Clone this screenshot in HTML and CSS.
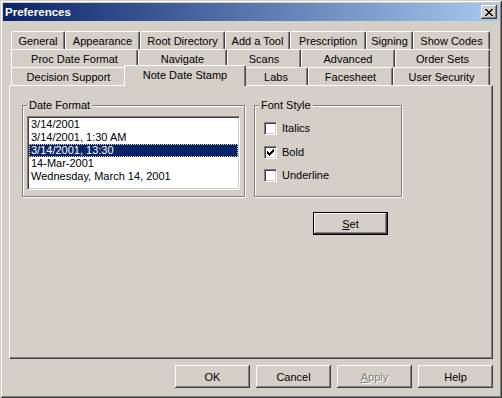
FILE: index.html
```html
<!DOCTYPE html>
<html>
<head>
<meta charset="utf-8">
<title>Preferences</title>
<link rel="stylesheet" href="styles.css">
</head>
<body>
<div class="window">
  <div class="titlebar">
    <span class="title">Preferences</span>
    <button class="close-btn" aria-label="Close">
      <svg width="8" height="7" viewBox="0 0 8 7" shape-rendering="crispEdges">
        <rect x="0" y="0" width="2" height="1"/><rect x="6" y="0" width="2" height="1"/>
        <rect x="1" y="1" width="2" height="1"/><rect x="5" y="1" width="2" height="1"/>
        <rect x="2" y="2" width="4" height="1"/>
        <rect x="3" y="3" width="2" height="1"/>
        <rect x="2" y="4" width="4" height="1"/>
        <rect x="1" y="5" width="2" height="1"/><rect x="5" y="5" width="2" height="1"/>
        <rect x="0" y="6" width="2" height="1"/><rect x="6" y="6" width="2" height="1"/>
      </svg>
    </button>
  </div>

  <div class="tabctrl">
    <div class="tabrows">
      <div class="tabrow">
        <div class="tab tab-general">General</div>
        <div class="tab tab-appearance">Appearance</div>
        <div class="tab tab-root">Root Directory</div>
        <div class="tab tab-addtool">Add a Tool</div>
        <div class="tab tab-prescription">Prescription</div>
        <div class="tab tab-signing">Signing</div>
        <div class="tab tab-showcodes">Show Codes</div>
      </div>
      <div class="tabrow">
        <div class="tab tab-procdate">Proc Date Format</div>
        <div class="tab tab-navigate">Navigate</div>
        <div class="tab tab-scans">Scans</div>
        <div class="tab tab-advanced">Advanced</div>
        <div class="tab tab-ordersets">Order Sets</div>
      </div>
      <div class="tabrow">
        <div class="tab tab-decision">Decision Support</div>
        <div class="tab tab-notedate active">Note Date Stamp</div>
        <div class="tab tab-labs">Labs</div>
        <div class="tab tab-facesheet">Facesheet</div>
        <div class="tab tab-usersec">User Security</div>
      </div>
    </div>

    <div class="panel">
      <fieldset class="group group-date">
        <legend>Date Format</legend>
        <div class="listbox">
          <div class="item">3/14/2001</div>
          <div class="item">3/14/2001, 1:30 AM</div>
          <div class="item selected">3/14/2001, 13:30</div>
          <div class="item">14-Mar-2001</div>
          <div class="item">Wednesday, March 14, 2001</div>
        </div>
      </fieldset>

      <div class="rightcol">
        <fieldset class="group group-font">
          <legend>Font Style</legend>
          <div class="checks">
            <div class="check-row">
              <span class="checkbox"></span><span class="check-label">Italics</span>
            </div>
            <div class="check-row">
              <span class="checkbox">
                <svg width="7" height="7" viewBox="0 0 7 7" shape-rendering="crispEdges">
                  <rect x="6" y="0" width="1" height="1"/>
                  <rect x="5" y="1" width="2" height="1"/>
                  <rect x="0" y="2" width="1" height="1"/><rect x="4" y="2" width="3" height="1"/>
                  <rect x="0" y="3" width="2" height="1"/><rect x="3" y="3" width="3" height="1"/>
                  <rect x="0" y="4" width="5" height="1"/>
                  <rect x="1" y="5" width="3" height="1"/>
                  <rect x="2" y="6" width="1" height="1"/>
                </svg>
              </span><span class="check-label">Bold</span>
            </div>
            <div class="check-row">
              <span class="checkbox"></span><span class="check-label">Underline</span>
            </div>
          </div>
        </fieldset>
        <button class="btn btn-default btn-set"><u>S</u>et</button>
      </div>
    </div>
  </div>

  <div class="footer">
    <button class="btn">OK</button>
    <button class="btn">Cancel</button>
    <button class="btn btn-disabled"><u>A</u>pply</button>
    <button class="btn">Help</button>
  </div>
</div>
</body>
</html>
```

FILE: styles.css
```css
html, body {
  margin: 0;
  padding: 0;
  background: #d4d0c8;
  overflow: hidden;
}

body {
  font-family: "Liberation Sans", Arial, sans-serif;
  font-size: 11px;
  color: #000;
}

.window {
  width: 502px;
  height: 398px;
  box-sizing: border-box;
  padding: 3px;
  background: #d4d0c8;
  box-shadow:
    inset 1px 1px 0 #d4d0c8,
    inset -1px -1px 0 #404040,
    inset 2px 2px 0 #ffffff,
    inset -2px -2px 0 #808080;
}

/* ---------- title bar ---------- */
.titlebar {
  height: 18px;
  display: flex;
  align-items: center;
  justify-content: space-between;
  padding: 0 2px 0 2px;
  background: linear-gradient(to right, #0a246a 0%, #a6caf0 100%);
}

.title {
  color: #fff;
  font-weight: bold;
  font-size: 11.5px;
  line-height: 18px;
}

.close-btn {
  width: 16px;
  height: 14px;
  padding: 0;
  border: none;
  background: #d4d0c8;
  display: flex;
  align-items: center;
  justify-content: center;
  box-shadow:
    inset -1px -1px 0 #404040,
    inset 1px 1px 0 #ffffff,
    inset -2px -2px 0 #808080;
}

.close-btn svg {
  fill: #000;
  margin-left: -1px;
}

/* ---------- tabs ---------- */
.tabctrl {
  margin: 10px 0 0 6px;
  width: 484px;
}

.tabrows {
  padding-left: 2px;
}

.tabrow {
  display: flex;
  height: 18px;
}

.tab {
  box-sizing: border-box;
  flex: none;
  height: 18px;
  background: #d4d0c8;
  border-top: 1px solid #fff;
  border-left: 1px solid #fff;
  border-right: 1px solid #404040;
  border-radius: 2px 2px 0 0;
  box-shadow: inset -1px 0 0 #808080;
  text-align: center;
  line-height: 16px;
  padding-top: 1px;
  white-space: nowrap;
}

.tab.active {
  position: relative;
  z-index: 1;
  height: 21px;
  margin: -2px -2px -1px -2px;
}

.tab-general { width: 54px; }
.tab-appearance { width: 75px; }
.tab-root { width: 85px; }
.tab-addtool { width: 65px; }
.tab-prescription { width: 76px; }
.tab-signing { width: 47px; }
.tab-showcodes { width: 77px; }

.tab-procdate { width: 127px; }
.tab-navigate { width: 89px; }
.tab-scans { width: 74px; }
.tab-advanced { width: 94px; }
.tab-ordersets { width: 95px; }

.tab-decision { width: 115px; }
.tab-notedate { width: 118px; }
.tab-notedate.active { width: 122px; }
.tab-labs { width: 64px; }
.tab-facesheet { width: 85px; }
.tab-usersec { width: 97px; }

/* ---------- panel ---------- */
.panel {
  box-sizing: border-box;
  width: 484px;
  height: 274px;
  border-top: 1px solid #fff;
  border-left: 1px solid #fff;
  border-right: 1px solid #404040;
  border-bottom: 1px solid #404040;
  box-shadow: inset -1px -1px 0 #808080;
  padding: 13px 0 0 12px;
  display: flex;
  align-items: flex-start;
}

.group {
  margin: 0;
  padding: 0 4px;
  box-sizing: border-box;
  border: 1px solid #808080;
  box-shadow: inset 1px 1px 0 #fff, 1px 1px 0 #fff;
  min-width: 0;
}

.group legend {
  padding: 0 2px;
  margin: 0;
  line-height: 13px;
  height: 13px;
  background: #d4d0c8;
}

.group-date {
  width: 223px;
  height: 98px;
  padding-top: 4px;
}

.listbox {
  box-sizing: border-box;
  width: 213px;
  height: 74px;
  background: #fff;
  border-top: 1px solid #808080;
  border-left: 1px solid #808080;
  border-right: 1px solid #fff;
  border-bottom: 1px solid #fff;
  box-shadow: inset 1px 1px 0 #404040, inset -1px -1px 0 #d4d0c8;
  padding: 1px;
}

.item {
  height: 13px;
  line-height: 13px;
  padding-left: 2px;
  white-space: nowrap;
}

.item.selected {
  background: #0a246a;
  color: #fff;
  outline: 1px dotted #e8d890;
  outline-offset: -1px;
}

.rightcol {
  margin-left: 9px;
  display: flex;
  flex-direction: column;
  align-items: flex-start;
}

.group-font {
  width: 148px;
  height: 98px;
}

.checks {
  padding: 10px 0 0 5px;
}

.check-row {
  display: flex;
  align-items: center;
  height: 13px;
}

.check-row + .check-row {
  margin-top: 10px;
}

.check-row:nth-child(2) {
  margin-top: 11px;
}

.checkbox {
  box-sizing: border-box;
  width: 13px;
  height: 13px;
  background: #fff;
  border-top: 1px solid #808080;
  border-left: 1px solid #808080;
  border-right: 1px solid #fff;
  border-bottom: 1px solid #fff;
  box-shadow: inset 1px 1px 0 #404040, inset -1px -1px 0 #d4d0c8;
  display: flex;
  align-items: flex-start;
  justify-content: flex-start;
  padding: 2px 0 0 2px;
}

.checkbox svg {
  fill: #000;
  display: block;
}

.check-label {
  margin-left: 5px;
  line-height: 13px;
}

/* ---------- buttons ---------- */
.btn {
  width: 75px;
  height: 23px;
  box-sizing: border-box;
  padding: 0;
  border: none;
  background: #d4d0c8;
  font-family: "Liberation Sans", Arial, sans-serif;
  font-size: 11px;
  color: #000;
  box-shadow:
    inset -1px -1px 0 #404040,
    inset 1px 1px 0 #ffffff,
    inset -2px -2px 0 #808080;
}

.btn u {
  text-decoration: underline;
}

.btn-default {
  box-shadow:
    inset 0 0 0 1px #000000,
    inset -2px -2px 0 #404040,
    inset 2px 2px 0 #ffffff,
    inset -3px -3px 0 #808080;
}

.btn-set {
  margin: 15px 0 0 59px;
}

.btn-disabled {
  color: #808080;
  text-shadow: 1px 1px 0 #ffffff;
}

.footer {
  display: flex;
  justify-content: flex-end;
  gap: 6px;
  margin-top: 6px;
  padding-right: 6px;
}
```
